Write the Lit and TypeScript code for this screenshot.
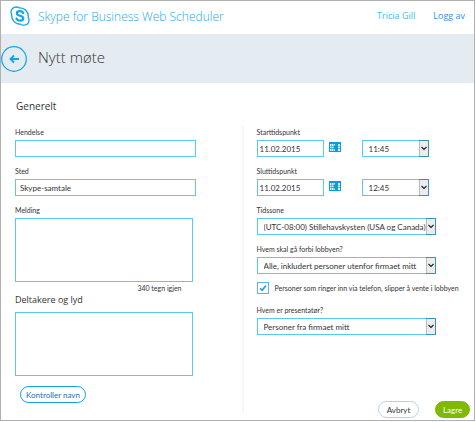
import { LitElement, html, css, svg } from "lit";
import { customElement } from "lit/decorators.js";

const calendarIcon = svg`
  <svg class="calendar" viewBox="0 0 12 10" width="12" height="10" aria-hidden="true">
    <rect width="12" height="10" fill="#0a9de4" />
    <g fill="#e6f5fd">
      <rect x="1" y="2" width="1.500" height="2" /><rect x="3" y="2" width="1.500" height="2" />
      <rect x="5" y="2" width="1" height="1.500" /><rect x="9" y="2" width="2" height="2" />
      <rect x="1" y="4.500" width="1.500" height="1.800" /><rect x="3" y="4.500" width="1.500" height="1.800" />
      <rect x="9" y="4.500" width="2" height="1.800" />
      <rect x="1" y="7" width="1.500" height="2" /><rect x="3" y="7" width="1.500" height="2" />
      <rect x="5" y="7.500" width="1" height="1.500" /><rect x="9" y="7" width="2" height="2" />
    </g>
  </svg>`;

@customElement("app-root")
export class AppRoot extends LitElement {
  static styles = css`
    :host {
      display: block;
      font-family: Lato, "Open Sans", "Noto Sans", sans-serif;
      color: #333;
      background: #fff;
    }
    * { box-sizing: border-box; }
    .frame {
      display: flex;
      flex-direction: column;
      min-height: calc(100vh - 1px);
      margin-right: 1px;
      border: 1px solid #b0b0b0;
    }
    a { text-decoration: none; }
    .top, h1, h2 { font-family: "Open Sans", "Noto Sans", sans-serif; }
    .top {
      display: flex;
      align-items: center;
      height: 33px;
      padding: 0 9px;
    }
    .logo { margin: 0 8px 4px 0; }
    .brand {
      flex: 1;
      padding-bottom: 2px;
      font-size: 12px;
      font-weight: 300;
      line-height: 16px;
      color: #1ba8e6;
      white-space: nowrap;
    }
    .account { display: flex; gap: 19px; padding-bottom: 4px; font-size: 9px; line-height: 12px; }
    .user { margin-right: -1px; color: #4db8ea; }
    .signout { color: #3a8ee0; }
    .band {
      display: flex;
      align-items: center;
      gap: 11px;
      height: 49px;
      background: #e4ecf2;
    }
    .back {
      display: block;
      width: 26px;
      height: 26px;
      padding: 0;
      border: 0;
      background: none;
    }
    .back svg { display: block; }
    h1 { margin: 0; padding-bottom: 4px; font-size: 15px; font-weight: 300; line-height: 20px; }
    h2 { margin: 0; font-size: 9px; font-weight: 400; line-height: 12px; }
    .general { padding: 17px 15px 0; font-size: 10px; }
    .columns {
      flex: 1;
      display: grid;
      grid-template-columns: 1fr 2px 1fr;
      padding: 14px 4px 2px 14px;
    }
    .divider { margin-bottom: 5px; background: #f8f8f9; }
    .column { display: flex; flex-direction: column; gap: 8px; min-width: 0; }
    .left { padding-right: 46px; }
    .right { padding-left: 13px; }
    .field { display: flex; flex-direction: column; gap: 2px; }
    .wide { margin-right: 34px; }
    .inset { margin-right: 3px; }
    .caption { font-size: 7px; line-height: 12px; }
    .text, textarea, select {
      display: block;
      width: 100%;
      min-width: 0;
      margin: 0;
      border: 1px solid #5ac8f5;
      border-radius: 0;
      background: #fff;
      color: #333;
      font: inherit;
      font-size: 8px;
    }
    .text, select { height: 17px; }
    .text { padding: 0 4px; }
    .date { width: 67px; padding: 0 2px; }
    textarea { height: 64px; padding: 4px; resize: none; }
    .drop { display: grid; }
    .drop select, .arrow { grid-area: 1 / 1; }
    select { appearance: none; padding: 0 0 0 6px; }
    .arrow { justify-self: end; pointer-events: none; z-index: 1; }
    .counter { margin-right: 11px; font-size: 7px; line-height: 12px; text-align: right; }
    .message { gap: 0; }
    .message .caption { margin-bottom: 2px; }
    .people { display: flex; flex-direction: column; gap: 6px; margin: -8px 3px 0 0; }
    .when { display: flex; align-items: flex-start; }
    .pick { display: block; margin: 2px 21px 0 5px; padding: 0; border: 0; background: none; }
    .calendar { display: block; }
    .time { width: 67px; }
    .check { display: flex; gap: 6px; height: 14px; font-size: 7px; line-height: 12px; white-space: nowrap; }
    .tick { display: grid; }
    .tick input, .tick svg { grid-area: 1 / 1; }
    .tick input {
      appearance: none;
      width: 12px;
      height: 12px;
      margin: 0;
      border: 1px solid #5ab4ec;
      background: #fff;
    }
    .tick svg { z-index: 1; pointer-events: none; visibility: hidden; }
    .tick input:checked + svg { visibility: visible; }
    .pill {
      height: 17px;
      padding: 0;
      border: 1px solid #a9d7ea;
      border-radius: 9px;
      background: #fff;
      color: #333;
      font: inherit;
      font-size: 8px;
      line-height: 12px;
    }
    .names { align-self: flex-start; width: 66px; margin: 2px 0 0 5px; border-color: #12a0e2; color: #1c6fb5; }
    .actions { display: flex; justify-content: flex-end; gap: 16px; margin-top: auto; }
    .cancel { width: 41px; }
    .save { width: 35px; border-color: #7fba00; background: #7fba00; color: #fff; }
  `;

  render() {
    return html`
      <div class="frame">
        <header class="top">
          <svg class="logo" viewBox="0 0 20 20" width="20" height="20" aria-hidden="true">
            <path d="M6.200 1 C3.300 1 1 3.300 1 6 C1 7 1.300 7.800 1.700 8.500 C1.100 13.700 5.200 18.300 10.500 18.200 C11.800 19.100 13 19.300 14 19.200 C17 19 19 16.800 19 14 C19 13 18.700 12 18.200 11.300 C18.900 6 14.700 1.600 9.300 1.900 C8.400 1.300 7.300 1 6.200 1 Z" fill="none" stroke="#12a5e8" stroke-width="1.300" />
            <path d="M13.200 7.200 C12.600 5.600 11.400 5.200 10 5.200 C8.300 5.200 6.900 6 6.900 7.400 C6.900 10.500 13.300 9 13.300 12.200 C13.300 13.900 11.800 14.700 10 14.700 C8.300 14.700 7 14 6.500 12.500" fill="none" stroke="#12a5e8" stroke-width="2.200" stroke-linecap="round" />
          </svg>
          <span class="brand">Skype for Business Web Scheduler</span>
          <nav class="account">
            <a class="user" href="#">Tricia Gill</a>
            <a class="signout" href="#">Logg av</a>
          </nav>
        </header>

        <div class="band">
          <button class="back" aria-label="Tilbake">
            <svg viewBox="0 0 26 26" width="26" height="26" aria-hidden="true">
              <circle cx="13" cy="13" r="12.300" fill="none" stroke="#12a5e8" stroke-width="1.200" />
              <path d="M18 13 H10 M13 9.500 L9.500 13 L13 16.500" fill="none" stroke="#12a5e8" stroke-width="1.900" />
            </svg>
          </button>
          <h1>Nytt møte</h1>
        </div>

        <h2 class="general">Generelt</h2>

        <main class="columns">
          <section class="column left">
            <div class="field">
              <label class="caption" for="event">Hendelse</label>
              <input class="text" id="event" />
            </div>
            <div class="field">
              <label class="caption" for="place">Sted</label>
              <input class="text" id="place" value="Skype-samtale" />
            </div>
            <div class="field message inset">
              <label class="caption" for="message">Melding</label>
              <textarea id="message"></textarea>
              <span class="counter">340 tegn igjen</span>
            </div>
            <div class="people">
              <h2 id="people-title">Deltakere og lyd</h2>
              <textarea aria-labelledby="people-title"></textarea>
            </div>
            <button class="pill names">Kontroller navn</button>
          </section>

          <div class="divider"></div>

          <section class="column right">
            ${this.moment("start", "Starttidspunkt", "11.02.2015", "11:45")}
            ${this.moment("end", "Sluttidspunkt", "11.02.2015", "12:45")}
            ${this.choice("zone", "Tidssone", "(UTC-08:00) Stillehavskysten (USA og Canada)")}
            ${this.choice("lobby", "Hvem skal gå forbi lobbyen?", "Alle, inkludert personer utenfor firmaet mitt")}
            <label class="check">
              <span class="tick">
                <input type="checkbox" checked />
                <svg viewBox="0 0 12 12" width="12" height="12" aria-hidden="true">
                  <path d="M3 6.300 L5.200 8.300 L9 3.500" fill="none" stroke="#2b9af0" stroke-width="1.700" />
                </svg>
              </span>
              Personer som ringer inn via telefon, slipper å vente i lobbyen
            </label>
            ${this.choice("presenter", "Hvem er presentatør?", "Personer fra firmaet mitt")}
            <div class="actions">
              <button class="pill cancel">Avbryt</button>
              <button class="pill save">Lagre</button>
            </div>
          </section>
        </main>
      </div>
    `;
  }

  private moment(id: string, title: string, date: string, time: string) {
    return html`
      <div class="field">
        <label class="caption" for=${id}>${title}</label>
        <div class="when">
          <input class="text date" id=${id} value=${date} />
          <button class="pick" aria-label="Velg dato">${calendarIcon}</button>
          <div class="drop time">
            <select aria-label=${title}><option>${time}</option></select>
            ${this.arrow()}
          </div>
        </div>
      </div>
    `;
  }

  private choice(id: string, title: string, value: string) {
    return html`
      <div class="field wide">
        <label class="caption" for=${id}>${title}</label>
        <div class="drop">
          <select id=${id}><option>${value}</option></select>
          ${this.arrow()}
        </div>
      </div>
    `;
  }

  private arrow() {
    return html`
      <svg class="arrow" viewBox="0 0 10 17" width="10" height="17" aria-hidden="true">
        <rect width="10" height="17" fill="#3a93b5" />
        <rect y="1" width="9" height="15" fill="#b8bcc0" />
        <rect x="1" y="1" width="8" height="15" fill="#ececee" />
        <path d="M2.500 7 L5 9.400 L7.500 7" fill="none" stroke="#222" stroke-width="1.200" />
      </svg>
    `;
  }
}
